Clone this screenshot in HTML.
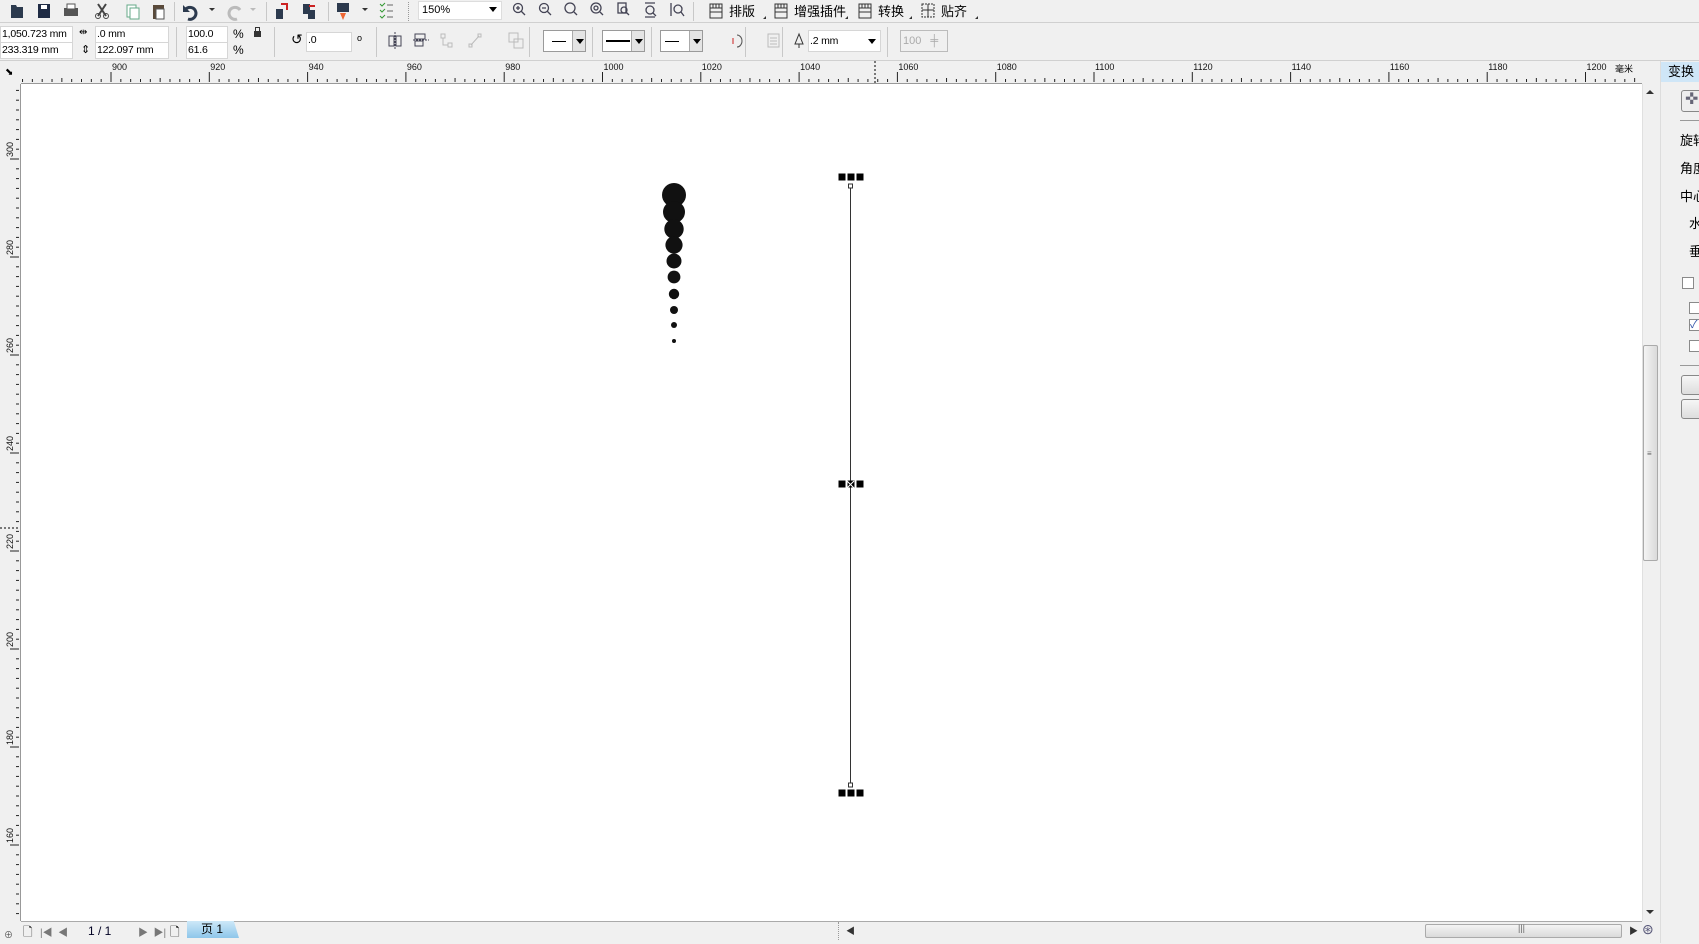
<!DOCTYPE html>
<html><head><meta charset="utf-8"><style>
*{margin:0;padding:0;box-sizing:border-box;white-space:nowrap}
body{width:1699px;height:943px;overflow:hidden;background:#f0f0f0;font-family:"Liberation Sans","Noto Sans CJK SC",sans-serif;font-size:11px;color:#000;position:relative}
.a{position:absolute}
.fld{position:absolute;background:#fff;border:1px solid #d6d6d6;font-size:10.5px;padding-left:1px;line-height:15px;height:17px;letter-spacing:-0.2px;overflow:visible}
.sep{position:absolute;width:1px;background:#c8c8c8}
.dd{position:absolute;height:22px;border:1px solid #9a9a9a;background:#fff}
.dd b{position:absolute;right:0;top:0;width:13px;height:20px;background:#e4e4e4;border-left:1px solid #aaa}
.dd b:after{content:"";position:absolute;left:3px;top:8px;border-left:4px solid transparent;border-right:4px solid transparent;border-top:5px solid #000}
.cb{position:absolute;width:12px;height:12px;border:1px solid #8a8a8a;background:#fff}
</style></head><body>
<div class="a" style="left:0;top:0;width:1699px;height:23px;border-bottom:1px solid #d0d0d0;background:#f0f0f0"></div>
<svg class="a" style="left:0;top:0" width="1000" height="23">
<g fill="#333" stroke="none">
<path d="M11 5h5l1 2h6v11H11z" fill="#2c3a4e"/>
<rect x="38" y="4" width="12" height="14" fill="#1f2b44"/><rect x="41" y="5" width="6" height="4" fill="#fff"/>
<rect x="64" y="8" width="14" height="8" fill="#555"/><rect x="67" y="4" width="8" height="5" fill="#fff" stroke="#555"/>
<path d="M98 4l8 12M106 4l-8 12" stroke="#444" stroke-width="2"/><circle cx="98" cy="16" r="2.5" fill="none" stroke="#444"/><circle cx="106" cy="16" r="2.5" fill="none" stroke="#444"/>
<rect x="127" y="5" width="9" height="12" fill="#fff" stroke="#6a8"/><rect x="130" y="8" width="9" height="11" fill="#fff" stroke="#6a8"/>
<rect x="153" y="5" width="11" height="14" fill="#5a4a3a"/><rect x="156" y="9" width="8" height="10" fill="#fff" stroke="#555"/>
<path d="M185 10a6 6 0 1 1 3 9" fill="none" stroke="#2c3a4e" stroke-width="3"/><path d="M183 5v7h7z" fill="#2c3a4e"/>
<path d="M209 8l3 3 3-3z"/>
<path d="M240 10a6 6 0 1 0-3 9" fill="none" stroke="#bbb" stroke-width="3"/>
<path d="M250 8l3 3 3-3z" fill="#bbb"/>
<rect x="276" y="9" width="7" height="10" fill="#2c3a4e"/><path d="M281 4h6v6" fill="none" stroke="#c22" stroke-width="2"/>
<rect x="303" y="4" width="7" height="10" fill="#2c3a4e"/><rect x="308" y="10" width="7" height="9" fill="#2c3a4e"/><path d="M309 6h6" stroke="#c22" stroke-width="2"/>
<rect x="337" y="3" width="12" height="9" fill="#2c3a4e"/><path d="M340 13h6l-3 7z" fill="#e63"/>
<path d="M362 8l3 3 3-3z"/>
<path d="M380 4l2 2 3-3M380 10l2 2 3-3M380 16l2 2 3-3" stroke="#393" fill="none"/><path d="M387 5h6M387 11h6M387 17h6" stroke="#666"/>
</g>
<g fill="none" stroke="#445" stroke-width="1.3">
<circle cx="518" cy="8" r="4.5"/><path d="M521 11l4 4"/><path d="M516 8h4M518 6v4"/>
<circle cx="544" cy="8" r="4.5"/><path d="M547 11l4 4M542 8h4"/>
<circle cx="570" cy="8" r="5"/><path d="M574 12l3 3"/>
<circle cx="596" cy="8" r="5"/><circle cx="596" cy="8" r="2"/><path d="M600 12l3 3"/>
<rect x="618" y="3" width="8" height="10"/><circle cx="624" cy="10" r="3"/><path d="M626 12l3 3"/>
<circle cx="650" cy="10" r="4"/><path d="M645 3h10M645 17h10M653 13l3 3"/>
<circle cx="678" cy="9" r="4"/><path d="M671 3v13M681 12l3 4"/>
</g>
</svg>
<div class="sep" style="left:174px;top:2px;height:19px"></div>
<div class="sep" style="left:266px;top:2px;height:19px"></div>
<div class="sep" style="left:328px;top:2px;height:19px"></div>
<div class="sep" style="left:408px;top:2px;height:19px;border-left:1px dotted #999;background:none"></div>
<div class="a" style="left:418px;top:1px;width:84px;height:19px;background:#fff;border:1px solid #ddd;font-size:11px;line-height:17px;padding-left:3px">150%</div>
<svg class="a" style="left:489px;top:7px" width="10" height="6"><path d="M0 0h8l-4 5z"/></svg>
<div class="sep" style="left:693px;top:2px;height:19px"></div>
<svg class="a" style="left:708px;top:2px" width="270" height="20"><g fill="none" stroke="#333"><rect x="2" y="2" width="12" height="14"/><path d="M2 6h12M2 10h12M5 2v4M8 2v4M11 2v4"/>
<rect x="67" y="2" width="12" height="14"/><path d="M67 6h12M67 10h12M70 2v4M73 2v4M76 2v4"/>
<rect x="151" y="2" width="12" height="14"/><path d="M151 6h12M151 10h12M154 2v4M157 2v4M160 2v4"/>
<rect x="214" y="2" width="12" height="13" stroke-dasharray="2 1"/><path d="M214 8h12M220 2v13"/></g>
<g fill="#333"><path d="M55 17l3-3v3zM137 17l3-3v3zM201 17l3-3v3zM267 17l3-3v3z"/></g></svg>
<div class="a" style="left:729px;top:1px;font-size:13px">排版</div>
<div class="a" style="left:794px;top:1px;font-size:13px">增强插件</div>
<div class="a" style="left:878px;top:1px;font-size:13px">转换</div>
<div class="a" style="left:941px;top:1px;font-size:13px">贴齐</div>

<div class="a" style="left:0;top:60px;width:1699px;height:1px;background:#d0d0d0"></div>
<div class="fld" style="left:0;top:26px;width:73px">1,050.723 mm</div>
<div class="fld" style="left:0;top:42px;width:73px">233.319 mm</div>
<div class="a" style="left:79px;top:27px;font-size:10px">⇹</div>
<div class="a" style="left:81px;top:43px;font-size:11px">⇕</div>
<div class="fld" style="left:95px;top:26px;width:74px">.0 mm</div>
<div class="fld" style="left:95px;top:42px;width:74px">122.097 mm</div>
<div class="sep" style="left:176px;top:27px;height:30px"></div>
<div class="fld" style="left:186px;top:26px;width:42px">100.0</div>
<div class="fld" style="left:186px;top:42px;width:42px">61.6</div>
<div class="a" style="left:233px;top:27px;font-size:12px">%</div>
<div class="a" style="left:233px;top:43px;font-size:12px">%</div>
<div class="a" style="left:254px;top:31px;width:7px;height:6px;background:#333"></div><div class="a" style="left:255px;top:27px;width:5px;height:6px;border:1px solid #333;border-bottom:none"></div>
<div class="sep" style="left:274px;top:27px;height:30px"></div>
<div class="a" style="left:291px;top:31px;font-size:14px">↺</div>
<div class="fld" style="left:306px;top:32px;width:46px;height:20px">.0</div>
<div class="a" style="left:357px;top:33px;font-size:9px">o</div>
<div class="sep" style="left:376px;top:27px;height:30px"></div>
<svg class="a" style="left:385px;top:30px" width="520" height="24" fill="none" stroke="#445">
<rect x="4" y="6" width="5" height="10"/><rect x="11" y="6" width="5" height="10"/><path d="M10 2v18" stroke-dasharray="2 1"/>
<rect x="30" y="4" width="10" height="5"/><rect x="30" y="11" width="8" height="5"/><path d="M28 10h16" stroke-dasharray="2 1"/>
<g stroke="#bbb"><rect x="56" y="4" width="4" height="4"/><rect x="63" y="13" width="4" height="4"/><path d="M58 8v7h5"/>
<path d="M86 15l8-9"/><rect x="84" y="14" width="3" height="3"/><rect x="93" y="4" width="3" height="3"/>
<rect x="124" y="3" width="9" height="9"/><rect x="129" y="9" width="9" height="9"/></g>
<g stroke="#555"><path d="M352 5a5 6 0 0 1 0 12"/><path d="M348 8v6" stroke="#c22"/></g>
<g stroke="#bbb"><rect x="383" y="4" width="11" height="13"/><path d="M385 8h7M385 11h7M385 14h7"/></g>
<path d="M414 4l-4 10h8z M414 14v4" stroke="#333"/>
</svg>
<div class="sep" style="left:529px;top:27px;height:30px"></div>
<div class="dd" style="left:543px;top:30px;width:43px"><b></b><div class="a" style="left:8px;top:10px;width:14px;height:1px;background:#000"></div></div>
<div class="sep" style="left:592px;top:27px;height:30px"></div>
<div class="dd" style="left:602px;top:30px;width:43px"><b></b><div class="a" style="left:3px;top:9px;width:24px;height:2px;background:#000"></div></div>
<div class="sep" style="left:651px;top:27px;height:30px"></div>
<div class="dd" style="left:660px;top:30px;width:43px"><b></b><div class="a" style="left:4px;top:10px;width:14px;height:1px;background:#000"></div></div>
<div class="sep" style="left:745px;top:27px;height:30px"></div>
<div class="sep" style="left:782px;top:27px;height:30px"></div>
<div class="fld" style="left:808px;top:30px;width:73px;height:22px;line-height:20px">.2 mm</div>
<svg class="a" style="left:868px;top:39px" width="10" height="6"><path d="M0 0h8l-4 5z"/></svg>
<div class="sep" style="left:887px;top:27px;height:30px"></div>
<div class="a" style="left:900px;top:30px;width:48px;height:22px;border:1px solid #bbb;color:#aaa;font-size:11px;line-height:20px;padding-left:2px">100 <span style="margin-left:6px">╪</span></div>

<div class="a" style="left:21px;top:84px;width:1621px;height:837px;background:#fff"></div>
<svg class="a" id="rul" style="left:0;top:61px" width="1660" height="882"></svg>
<div class="a" style="left:1642px;top:84px;width:18px;height:837px;background:#f0f0f0;border-left:1px solid #e0e0e0"></div>
<svg class="a" style="left:1645px;top:89px" width="10" height="6"><path d="M1 5h8l-4-4z" fill="#333"/></svg>
<div class="a" style="left:1643px;top:345px;width:15px;height:216px;border:1px solid #aaa;border-radius:2px;background:linear-gradient(90deg,#f4f4f4,#dadada)"></div>
<div class="a" style="left:1647px;top:449px;font-size:8px;color:#666">≡</div>
<svg class="a" style="left:1645px;top:909px" width="10" height="6"><path d="M1 1h8l-4 4z" fill="#333"/></svg>
<div class="a" style="left:21px;top:921px;width:1621px;height:22px;background:#f0f0f0;border-top:1px solid #aaa"></div>
<div class="a" style="left:0;top:921px;width:21px;height:22px;font-size:9px;color:#555;padding:7px 0 0 4px">⊕</div>
<div class="a" style="left:23px;top:923px;font-size:12px;color:#222">🗋</div>
<div class="a" style="left:40px;top:924px;font-size:10px;color:#777">|◀ &nbsp;◀</div>
<div class="a" style="left:88px;top:924px;font-size:12px;color:#002">1 / 1</div>
<div class="a" style="left:138px;top:924px;font-size:10px;color:#777">▶ &nbsp;▶|</div>
<div class="a" style="left:170px;top:923px;font-size:12px">🗋</div>
<div class="a" style="left:187px;top:921px;width:52px;height:17px;background:linear-gradient(#cde8f8,#8ec6ea);clip-path:polygon(0 0,90% 0,100% 100%,0 100%);font-size:12px;padding-left:14px;line-height:16px">页 1</div>
<div class="a" style="left:838px;top:922px;width:1px;height:18px;border-left:1px dotted #999"></div>
<div class="a" style="left:846px;top:924px;font-size:9px;color:#333">◀</div>
<div class="a" style="left:1425px;top:924px;width:197px;height:14px;border:1px solid #aaa;border-radius:2px;background:linear-gradient(#f4f4f4,#dadada)"></div>
<div class="a" style="left:1518px;top:923px;font-size:9px;color:#666">|||</div>
<div class="a" style="left:1629px;top:924px;font-size:9px;color:#333">▶</div>
<div class="a" style="left:1642px;top:921px;font-size:14px;color:#557">⊛</div>

<div class="a" style="left:1660px;top:61px;width:39px;height:882px;background:#f0f0f0;border-left:1px solid #ddd;overflow:hidden">
<div class="a" style="left:0;top:1px;width:39px;height:20px;background:#cfe6f7;font-size:13px;padding-left:7px;line-height:20px">变换</div>
<div class="a" style="left:20px;top:29px;width:24px;height:22px;border:1px solid #888;border-radius:3px;background:#eee;font-size:16px;line-height:18px;padding-left:3px;color:#667">✜</div>
<div class="a" style="left:19px;top:59px;width:30px;height:1px;background:#999"></div>
<div class="a" style="left:19px;top:69px;font-size:13px">旋转</div>
<div class="a" style="left:19px;top:97px;font-size:13px">角度</div>
<div class="a" style="left:19px;top:125px;font-size:13px">中心</div>
<div class="a" style="left:28px;top:152px;font-size:13px">水平</div>
<div class="a" style="left:28px;top:180px;font-size:13px">垂直</div>
<div class="cb" style="left:21px;top:216px"></div>
<div class="cb" style="left:28px;top:241px"></div>
<div class="cb" style="left:28px;top:258px;color:#35a;font-size:11px;line-height:10px">✓</div>
<div class="cb" style="left:28px;top:279px"></div>
<div class="a" style="left:19px;top:304px;width:30px;height:1px;background:#999"></div>
<div class="a" style="left:20px;top:314px;width:24px;height:20px;border:1px solid #888;border-radius:3px;background:linear-gradient(#f6f6f6,#ddd)"></div>
<div class="a" style="left:20px;top:338px;width:24px;height:20px;border:1px solid #888;border-radius:3px;background:linear-gradient(#f6f6f6,#ddd)"></div>
</div>
<script>
var s=document.getElementById('rul'),h='',o=61;
h+='<rect x="0" y="0" width="1660" height="23" fill="#f0f0f0"/><rect x="0" y="0" width="21" height="860" fill="#f0f0f0"/>';
h+='<line x1="21" y1="22.5" x2="1642" y2="22.5" stroke="#999"/><line x1="20.5" y1="23" x2="20.5" y2="860" stroke="#999"/>';
for(var v=878;v<=1212;v+=2){var x=111+(v-900)*4.915;if(x<22||x>1640)continue;var big=(v%20==0),mid=(v%10==0);
h+='<line x1="'+x+'" y1="'+(big?11:mid?17:18)+'" x2="'+x+'" y2="21" stroke="#222"/>';
if(big&&v<=1200)h+='<text x="'+(x+1)+'" y="9" font-size="9" font-family="Liberation Sans,sans-serif" fill="#111">'+v+'</text>';}
h+='<text x="1615" y="11" font-size="9" font-family="Noto Sans CJK SC,sans-serif">毫米</text>';
h+='<line x1="875" y1="0" x2="875" y2="22" stroke="#000" stroke-dasharray="2 2"/>';
for(var v=316;v>=140;v-=2){var y=159+(300-v)*4.9-o;if(y<24||y>858)continue;var big=(v%20==0);
h+='<line x1="'+(big?10:16)+'" y1="'+y+'" x2="19" y2="'+y+'" stroke="#222"/>';
if(big)h+='<text transform="translate(13,'+(y-2)+') rotate(-90)" font-size="9" font-family="Liberation Sans,sans-serif" fill="#111">'+v+'</text>';}
h+='<line x1="0" y1="'+(528-o)+'" x2="20" y2="'+(528-o)+'" stroke="#000" stroke-dasharray="2 2"/>';
h+='<text x="5" y="14" font-size="10">⬊</text>';
var ys=[195,212,229,245,261,277,294,310,325,341],rs=[12,11,9.7,8.6,7.5,6.4,5.2,4,3,2];
for(var i=0;i<10;i++)h+='<circle cx="674" cy="'+(ys[i]-o)+'" r="'+rs[i]+'" fill="#111"/>';
h+='<line x1="850.5" y1="'+(186-o)+'" x2="850.5" y2="'+(785-o)+'" stroke="#333"/>';
h+='<rect x="848.5" y="'+(184-o)+'" width="4" height="4" fill="#fff" stroke="#333"/><rect x="848.5" y="'+(783-o)+'" width="4" height="4" fill="#fff" stroke="#333"/>';
[177,484,793].forEach(function(y){[842,851,860].forEach(function(x){h+='<rect x="'+(x-3.5)+'" y="'+(y-o-3.5)+'" width="7" height="7" fill="#000"/>';});});
h+='<path d="M847 '+(481-o)+'l7 7M854 '+(481-o)+'l-7 7" stroke="#fff"/>';
s.innerHTML=h;
</script>
</body></html>
